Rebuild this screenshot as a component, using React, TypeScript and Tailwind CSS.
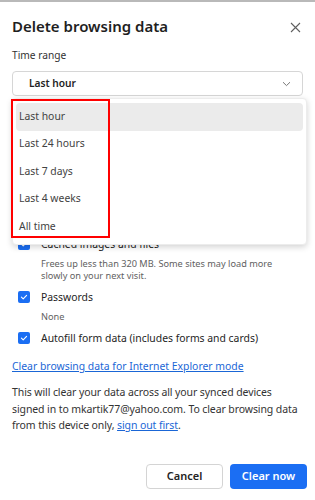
import React from "react";

const ranges = ["Last hour", "Last 24 hours", "Last 7 days", "Last 4 weeks", "All time"];

// first three rows sit under the open dropdown
const items = [
  { label: "Browsing history", desc: ["3 items. Includes autocompletions in the address bar."], hidden: true },
  { label: "Download history", desc: ["None"], hidden: true },
  { label: "Cookies and other site data", desc: ["From 4 sites. Signs you out of most sites."], hidden: true },
  {
    label: "Cached images and files",
    desc: ["Frees up less than 320 MB. Some sites may load more", "slowly on your next visit."],
    hidden: false,
  },
  { label: "Passwords", desc: ["None"], hidden: false },
  { label: "Autofill form data (includes forms and cards)", desc: [] as string[], hidden: false },
];

function Check() {
  return (
    <span className="mt-[4px] w-[12px] h-[12px] shrink-0 rounded-[2px] bg-[#1b6ef3] flex items-center justify-center">
      <svg width="8" height="8" viewBox="0 0 8 8" fill="none">
        <path d="M1.4 4.1 3.2 5.8 6.6 2.3" stroke="white" strokeWidth="1.1" strokeLinecap="round" strokeLinejoin="round" />
      </svg>
    </span>
  );
}

export default function App() {
  return (
    <div className="relative w-[315px] h-[500px] overflow-hidden bg-white border-t-2 border-[#b9b9b9] font-['Noto_Sans',sans-serif] text-[#1f1f1f]">
      {/* Header */}
      <div className="flex items-center justify-between pl-3 pr-[14px] pt-[13px]">
        <h2 className="text-[15px] font-semibold leading-[22px]">Delete browsing data</h2>
        <svg width="11" height="11" viewBox="0 0 11 11" className="mt-[2px]">
          <path d="M1 1 10 10M10 1 1 10" stroke="#5f5f5f" strokeWidth="1.1" />
        </svg>
      </div>

      <div className="px-3">
        <div className="mt-[10px] text-[10.2px] leading-[16px] text-[#333]">Time range</div>

        {/* Select */}
        <div className="mt-[8px] h-[25px] rounded-[4px] border border-[#d6d6d6] flex items-center justify-between pl-[16px] pr-[11px]">
          <span className="text-[10.2px] font-semibold text-[#1f1f1f]">Last hour</span>
          <svg width="9" height="6" viewBox="0 0 9 6">
            <path d="M1 1.2 4.5 4.6 8 1.2" stroke="#777" strokeWidth="1" fill="none" />
          </svg>
        </div>

        {/* Checkbox list */}
        <div className="mt-[15px] flex flex-col gap-[5px] pl-[6px]">
          {items.map((it) => (
            <div key={it.label} className={"flex gap-[11px] " + (it.hidden ? "invisible" : "")}>
              <Check />
              <div>
                <div className="text-[10.4px] leading-[20px] text-[#242424]">{it.label}</div>
                {it.desc.length > 0 && (
                  <div className="mt-[4px] text-[9.2px] leading-[12px] text-[#616161]">
                    {it.desc.map((d) => (
                      <div key={d}>{d}</div>
                    ))}
                  </div>
                )}
              </div>
            </div>
          ))}
        </div>

        <a className="block mt-[10px] text-[10.4px] leading-[16px] text-[#1a66d6] underline">
          Clear browsing data for Internet Explorer mode
        </a>

        <p className="mt-[10px] mr-[-10px] whitespace-nowrap text-[10.5px] leading-[16.5px] text-[#333] tracking-[-0.1px]">
          This will clear your data across all your synced devices
          <br />
          signed in to mkartik77@yahoo.com. To clear browsing data
          <br />
          from this device only, <span className="text-[#1a66d6] underline">sign out first</span>.
        </p>

        <div className="mt-[30px] flex justify-end gap-[7px] mr-[-4px]">
          <button className="w-[77px] h-[25px] rounded-[4px] border border-[#d4d4d4] bg-white text-[11px] font-semibold text-[#242424]">
            Cancel
          </button>
          <button className="w-[77px] h-[25px] rounded-[4px] bg-[#1b6ef3] text-[11px] font-semibold text-white">
            Clear now
          </button>
        </div>
      </div>

      {/* Open dropdown */}
      <div className="absolute left-[12px] top-[96px] w-[295px] rounded-[4px] bg-white shadow-[0_2px_6px_rgba(0,0,0,0.18)] border border-[#ececec] px-[3px] pt-[4px] pb-[3px] flex flex-col">
        {ranges.map((r, i) => (
          <div
            key={r}
            className={
              "h-[27.5px] shrink-0 flex items-center pl-[3px] rounded-[4px] text-[10.4px] text-[#424242] " +
              (i === 0 ? "bg-[#ebebeb]" : "")
            }
          >
            {r}
          </div>
        ))}
      </div>

      {/* Highlight box */}
      <div className="absolute left-[11px] top-[97px] w-[99px] h-[139px] border-2 border-[#ff0000]" />
    </div>
  );
}
